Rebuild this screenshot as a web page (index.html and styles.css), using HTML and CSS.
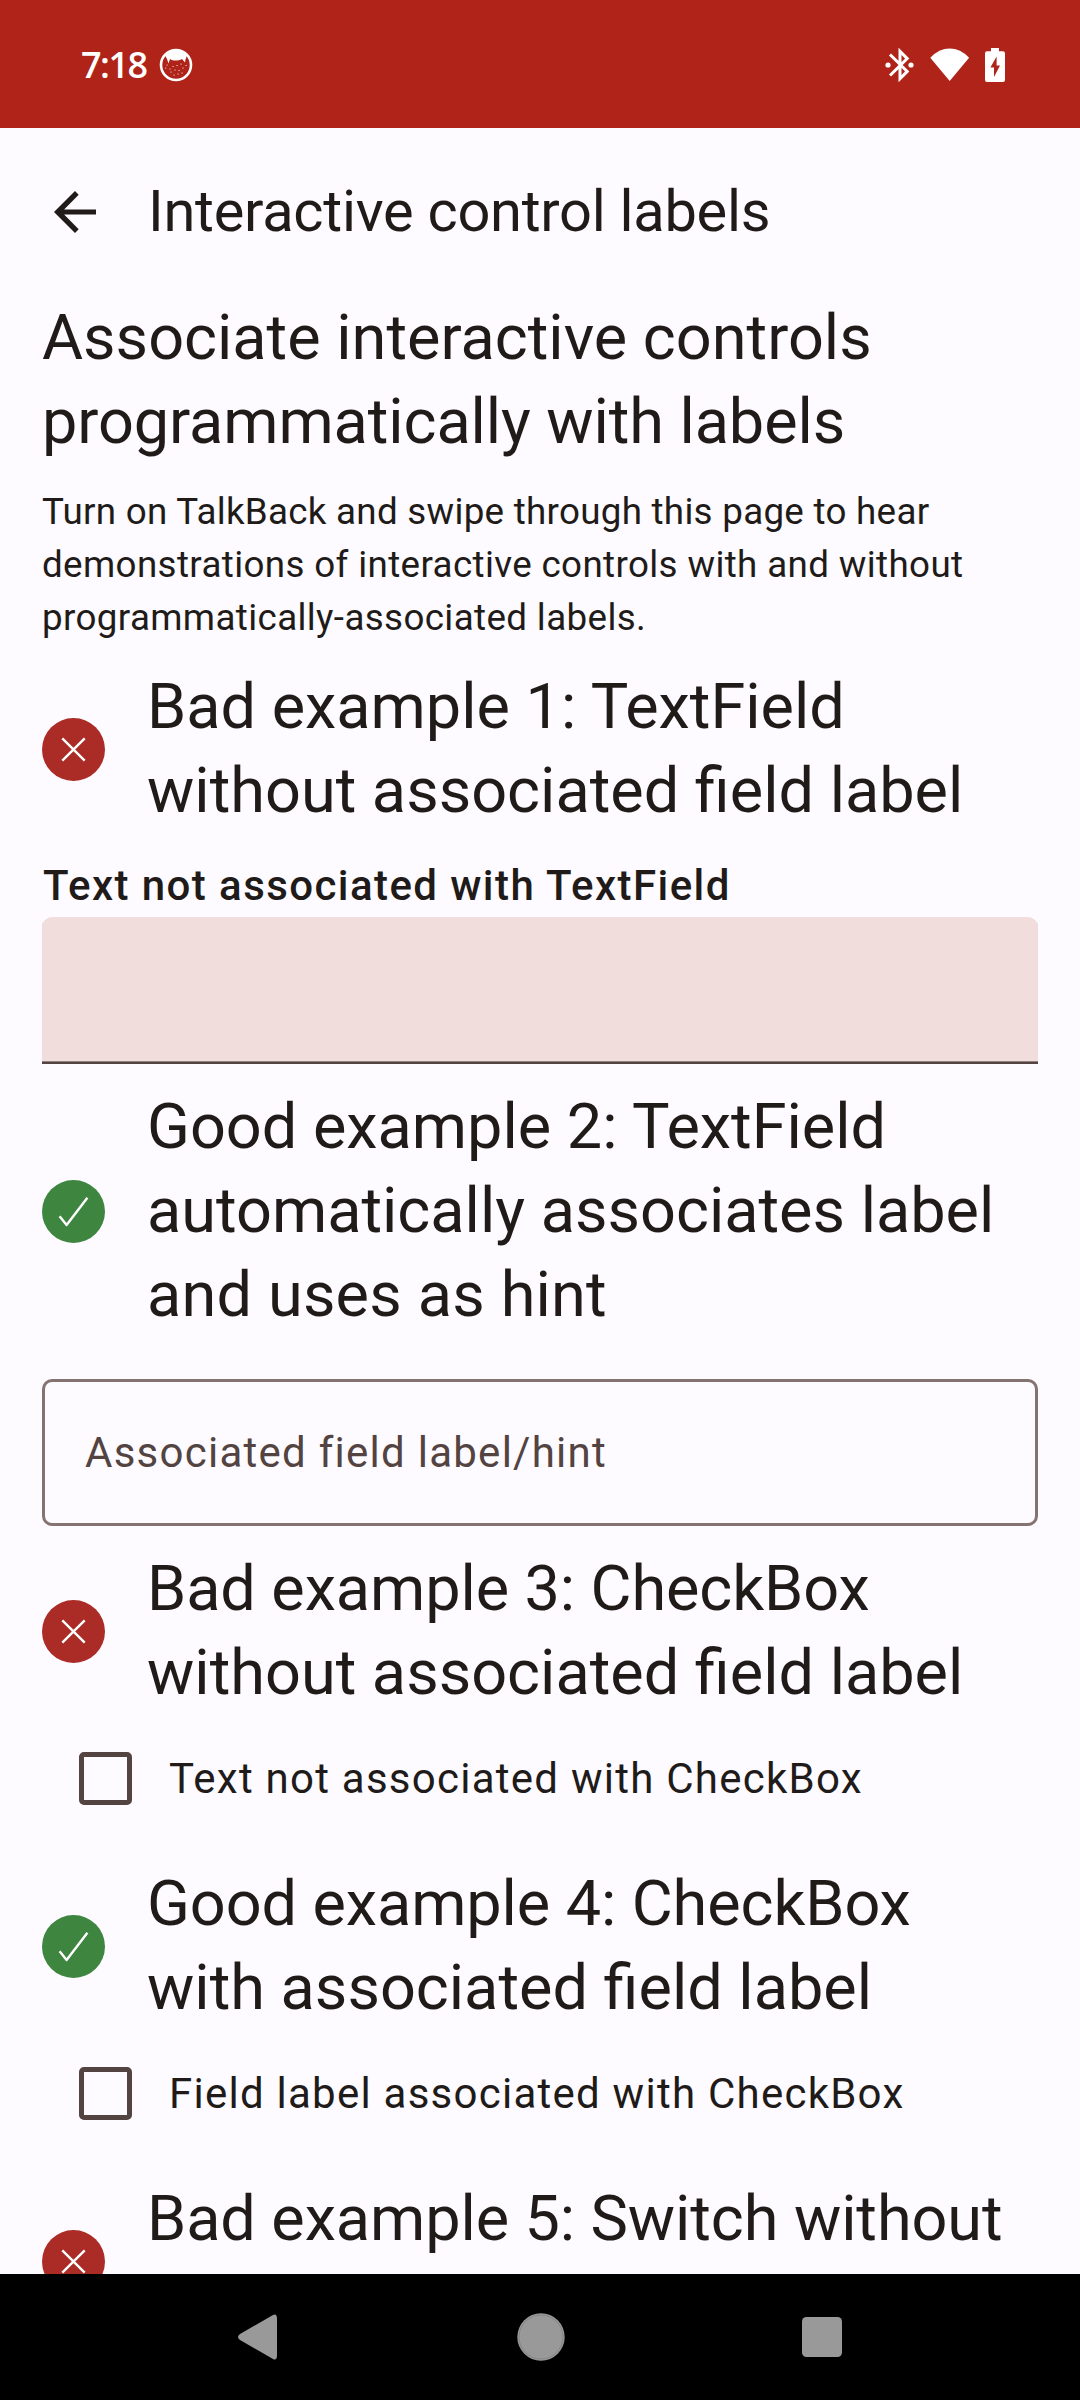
FILE: index.html
```html
<!DOCTYPE html>
<html lang="en">
<head>
<meta charset="utf-8">
<title>Interactive control labels</title>
<link rel="stylesheet" href="styles.css">
</head>
<body>
<svg class="defs" aria-hidden="true">
  <symbol id="bad" viewBox="0 0 63 63"><circle cx="31.5" cy="31.5" r="31.5" fill="#ab2c26"/><path d="M20.3 20.3 42.7 42.7M42.7 20.3 20.3 42.7" stroke="#fff" stroke-width="2.4" fill="none"/></symbol>
  <symbol id="good" viewBox="0 0 63 63"><circle cx="31.5" cy="31.5" r="31.5" fill="#3e8540"/><path d="M17.6 36.2 24.6 45 45.4 17.8" stroke="#fff" stroke-width="2.4" stroke-linejoin="round" fill="none"/></symbol>
</svg>
<div class="screen">
  <header class="status">
    <span class="clock">7:18</span>
    <svg class="cat" width="34" height="34" viewBox="0 0 34 34"><circle cx="17" cy="17" r="15" fill="none" stroke="#fff" stroke-width="2.6"/><path d="M6 7.5C12 1 22 1 28 7.5L26.5 11.5 26 14.5 23 11C19 13 14 13 11 11L9.5 15.5 8 11Z" fill="#fff"/><path d="M8 17h.1M6.8 20h.1M11 21h.1M12 24h.1M16 22h.1M20 22.5h.1M18 17.5h.1M22 16h.1M24 20h.1M27 17.5h.1M14 18.5h.1M19 26h.1M15 27h.1M23 25h.1" stroke="#fff" stroke-width="1.1" stroke-linecap="round"/></svg>
    <div class="status-icons">
      <svg width="30" height="34" viewBox="0 0 30 34"><path d="M5 6.5 22.2 23.4 15 30.7V3.3L22.2 10.6 5 27.5" fill="none" stroke="#fff" stroke-width="3"/><circle cx="3" cy="17" r="2.6" fill="#fff"/><circle cx="26" cy="17" r="2.6" fill="#fff"/></svg>
      <svg width="40" height="34" viewBox="0 0 40 34"><path d="M.3 9.7Q9 .5 19.7.5T39.1 9.7L19.7 33Z" fill="#fff"/></svg>
      <svg width="20" height="34" viewBox="0 0 20 34"><path fill-rule="evenodd" d="M6 0H14V3.3H18Q20 3.3 20 5.3V32Q20 34 18 34H2Q0 34 0 32V5.3Q0 3.3 2 3.3H6ZM11.6 8.5 5.4 19.5H9V29L15 17.5H11.6Z" fill="#fff"/></svg>
    </div>
  </header>
  <nav class="topbar">
    <svg class="back" width="42" height="42" viewBox="0 0 42 42"><path d="M42 18.4H10.1L24.7 3.7 21 0 0 21 21 42 24.7 38.3 10.1 23.6H42Z" fill="#201a19"/></svg>
    <h1 class="title">Interactive control labels</h1>
  </nav>
  <main class="content">
    <h2 class="headline">Associate interactive controls<br><span class="tight">programmatically with labels</span></h2>
    <p class="intro"><span class="intro-lead">Turn on TalkBack and swipe through this page to hear</span><br>demonstrations of interactive controls with and without<br>programmatically-associated labels.</p>
    <section class="example">
      <svg class="badge"><use href="#bad"/></svg>
      <h2 class="headline">Bad example 1: TextField<br>without associated field label</h2>
    </section>
    <div class="filled-group">
      <div class="label">Text not associated with TextField</div>
      <div class="filled-field"></div>
    </div>
    <section class="example">
      <svg class="badge"><use href="#good"/></svg>
      <h2 class="headline">Good example 2: TextField<br>automatically associates label<br><span class="loose">and uses as hint</span></h2>
    </section>
    <div class="outlined-field">Associated field label/hint</div>
    <section class="example">
      <svg class="badge"><use href="#bad"/></svg>
      <h2 class="headline"><span class="tight">Bad example 3: CheckBox</span><br>without associated field label</h2>
    </section>
    <div class="check-row"><span class="box"></span><span class="check-text">Text not associated with CheckBox</span></div>
    <section class="example">
      <svg class="badge"><use href="#good"/></svg>
      <h2 class="headline"><span class="tight">Good example 4: CheckBox</span><br>with associated field label</h2>
    </section>
    <div class="check-row"><span class="box"></span><span class="check-text">Field label associated with CheckBox</span></div>
    <section class="example last">
      <svg class="badge"><use href="#bad"/></svg>
      <h2 class="headline"><span class="tight">Bad example 5: Switch without</span></h2>
    </section>
  </main>
  <footer class="navbar">
    <svg width="42" height="48" viewBox="0 0 42 48"><path d="M36 2Q40 0 40 6V42Q40 48 36 46L3 27Q-1 24 3 21Z" fill="#999"/></svg>
    <svg width="48" height="48" viewBox="0 0 48 48"><circle cx="24" cy="24" r="23.7" fill="#999"/><circle cx="24" cy="24" r="22" fill="none" stroke="#777" stroke-width=".6"/></svg>
    <svg width="40" height="42" viewBox="0 0 40 42"><rect y="1" width="40" height="40" rx="4.5" fill="#999"/></svg>
  </footer>
</div>
</body>
</html>
```

FILE: styles.css
```css
* { box-sizing: border-box; }
body { margin: 0; background: #fdfbff; color: #201a19; font-family: Roboto, sans-serif; }
h1, h2, p { margin: 0; font-weight: 400; }
svg { display: block; flex: none; }
.defs { display: none; }
.screen { display: flex; flex-direction: column; width: 1080px; height: 2400px; overflow: hidden; }
.status { display: flex; align-items: center; flex: none; height: 128px; padding: 2px 75px 0 81px; background: #af2318; color: #fff; }
.clock { width: 78px; font-family: "Open Sans", sans-serif; font-size: 36px; font-weight: 600; line-height: 42px; letter-spacing: -1.5px; white-space: nowrap; }
.status-icons { display: flex; align-items: center; gap: 15px; margin-left: auto; }
.topbar { display: flex; align-items: center; flex: none; height: 168px; padding: 0 54px; gap: 52px; }
.title { font-size: 57.75px; line-height: 73.5px; letter-spacing: -.27px; white-space: nowrap; }
.content { display: flex; flex-direction: column; flex: 1; min-height: 0; gap: 21px; padding: 0 42px; overflow: hidden; }
.content > * { flex: none; }
.headline { font-size: 63px; line-height: 84px; white-space: nowrap; }
.tight { letter-spacing: -.09px; }
.loose { letter-spacing: .19px; }
.intro { font-size: 36.75px; line-height: 53px; letter-spacing: .37px; white-space: nowrap; }
.intro-lead { letter-spacing: .28px; }
.example { display: flex; align-items: center; gap: 42px; }
.badge { width: 63px; height: 63px; }
.label { padding-left: 1px; font-size: 42px; font-weight: 500; line-height: 63px; letter-spacing: 1.42px; }
.filled-field { height: 147px; background: #f1dedc; border-bottom: 2px solid #534341; border-radius: 10px 10px 0 0; box-shadow: inset 0 -1px #8f807e; }
.outlined-field { height: 147px; margin-top: 21px; padding: 0 40px; border: 3px solid #857371; border-radius: 10px; color: #534341; font-size: 42px; line-height: 141px; letter-spacing: 1.26px; }
.check-row { display: flex; align-items: center; height: 126px; margin-top: -21px; padding-left: 37px; gap: 37px; }
.box { width: 53px; height: 53px; border: 5px solid #534341; border-radius: 5px; }
.check-text { font-size: 42px; line-height: 63px; letter-spacing: 1.25px; }
.last { height: 168px; }
.last .headline { align-self: flex-start; }
.navbar { display: flex; align-items: center; justify-content: space-between; flex: none; height: 126px; padding: 0 238px 0 237px; background: #000; }
```
